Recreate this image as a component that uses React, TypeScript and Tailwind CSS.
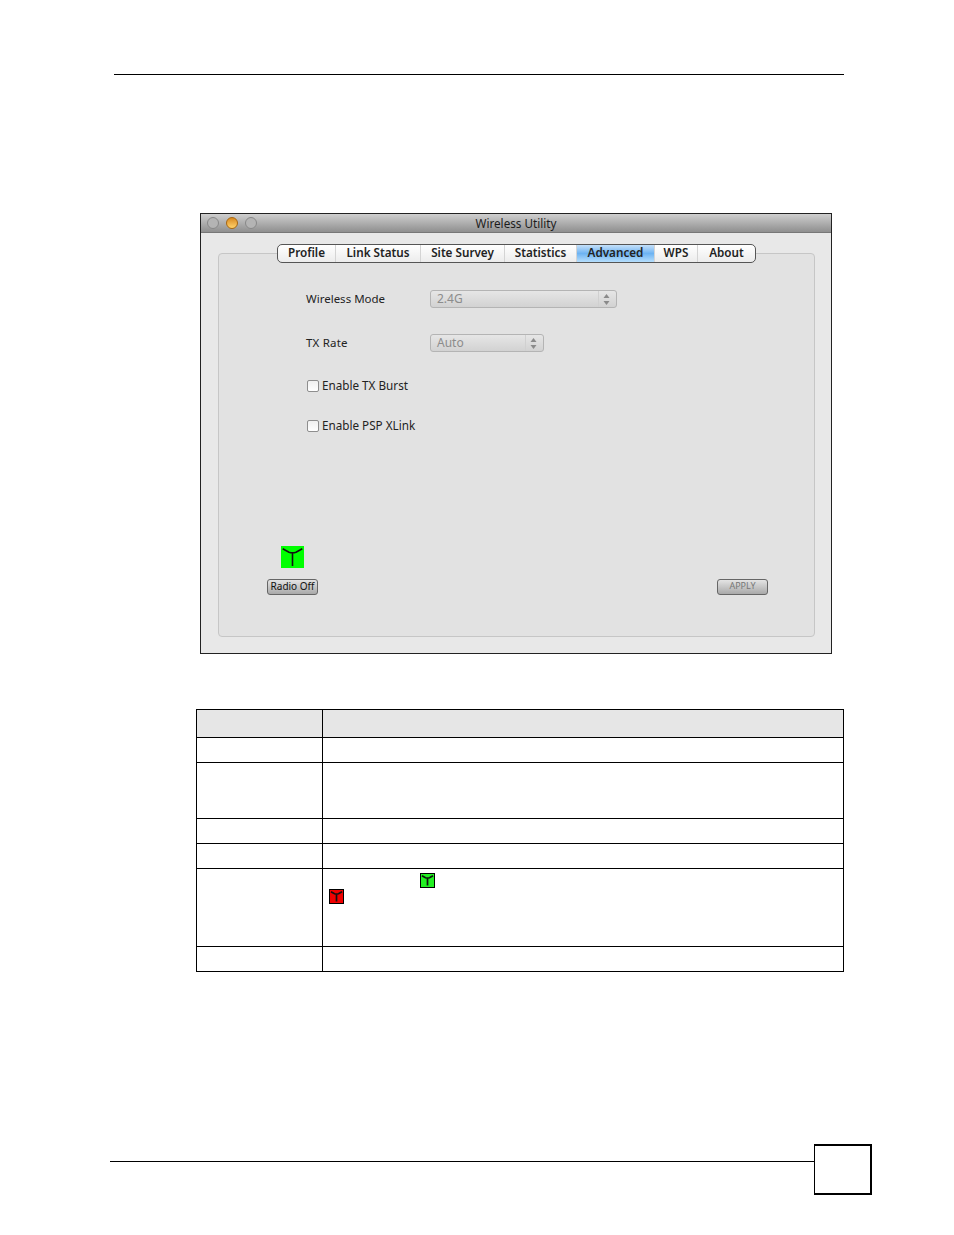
const tabs = [
  { label: "Profile", width: "w-[58px]" },
  { label: "Link Status", width: "w-[85px]" },
  { label: "Site Survey", width: "w-[84px]" },
  { label: "Statistics", width: "w-[72px]" },
  { label: "Advanced", width: "w-[78px]", active: true },
  { label: "WPS", width: "w-[43px]" },
  { label: "About", width: "w-[57px]" },
];

const rows = ["h-[25px]", "h-[56px]", "h-[25px]", "h-[25px]", "h-[78px]", "h-[25px]"];

function Antenna({ size, border, color }: { size: string; border?: boolean; color: string }) {
  return (
    <svg
      viewBox="0 0 23 22"
      className={`${size} ${color} ${border ? "border border-black" : ""} block`}
    >
      <path
        d="M11.500 20V6M1.700 2.800L8 6.200Q11.500 7.400 15 6.200L21.300 2.800"
        fill="none"
        stroke="#111"
        strokeWidth={border ? 3 : 1.6}
      />
    </svg>
  );
}

function Stepper() {
  return (
    <svg viewBox="0 0 7 11" className="w-[7px] h-[11px]">
      <path d="M3.500 0L6.500 4H.5z" fill="#8a8a8a" />
      <path d="M3.500 11L.5 7h6z" fill="#8a8a8a" />
    </svg>
  );
}

function Select({ value, width }: { value: string; width: string }) {
  return (
    <div
      className={`${width} h-[18px] flex items-center rounded-[3px] border border-[#b4b4b4] bg-gradient-to-b from-[#e6e6e6] to-[#d2d2d2] text-[12px] text-[#8c8c8c]`}
    >
      <span className="flex-1 pl-[6px]">{value}</span>
      <span className="w-[18px] h-full pr-[2px] flex items-center justify-center border-l border-[#d0d0d0]">
        <Stepper />
      </span>
    </div>
  );
}

function Check({ label, className }: { label: string; className: string }) {
  return (
    <label className={`flex items-center h-[16px] ${className}`}>
      <span className="w-[12px] h-[12px] rounded-[2px] border border-[#8e8e8e] bg-gradient-to-b from-[#f0f0f0] to-[#ffffff]" />
      <span className="ml-[3px] text-[11.7px] text-[#222]">{label}</span>
    </label>
  );
}

function PushButton({ label, muted }: { label: string; muted?: boolean }) {
  return (
    <button
      className={`w-[51px] h-[16px] pb-[2px] flex items-center justify-center rounded-[3px] border border-[#666] bg-gradient-to-b from-[#e4e4e4] to-[#a9a9a9] ${muted ? "text-[9px] text-[#777]" : "text-[10px] text-[#111]"}`}
    >
      {label}
    </button>
  );
}

export default function App() {
  return (
    <div className="relative w-[954px] h-[1235px] bg-white font-['Noto_Sans','Liberation_Sans',sans-serif] overflow-hidden">
      <div className="pt-[74px] pl-[114px]">
        <div className="w-[730px] h-px bg-black" />
      </div>

      {/* app window */}
      <div className="ml-[200px] mt-[138px] w-[632px] h-[441px] border border-[#222] bg-[#e8e8e8] flex flex-col">
        <div className="h-[19px] flex items-center border-b border-[#777] bg-gradient-to-b from-[#cfcfcf] to-[#8f8f8f]">
          <div className="flex items-center gap-[7px] pl-[6px] w-[80px]">
            <span className="w-[12px] h-[12px] rounded-full border border-[#888] bg-[#b4b4b4]" />
            <span className="w-[12px] h-[12px] rounded-full border border-[#a8660f] bg-gradient-to-b from-[#d98a1c] to-[#ffd36a]" />
            <span className="w-[12px] h-[12px] rounded-full border border-[#888] bg-[#b4b4b4]" />
          </div>
          <span className="flex-1 text-center pr-[80px] pt-px text-[11.7px] text-[#1c1c1c]">Wireless Utility</span>
        </div>

        <div className="mx-[17px] mt-[20px] w-[597px] h-[384px] rounded-[4px] border border-[#c6c6c6] bg-[#e2e2e2] flex flex-col">
          {/* tabs sit across the panel's top edge */}
          <div className="ml-[58px] -mt-[10px] w-[479px] h-[19px] flex rounded-[5px] border border-[#555] bg-gradient-to-b from-[#ffffff] to-[#ececec] overflow-hidden">
            {tabs.map((tab) => (
              <div
                key={tab.label}
                className={`${tab.width} pb-px flex items-center justify-center border-r border-[#d4d4d4] last:border-r-0 text-[11.7px] font-semibold text-[#222] ${tab.active ? "bg-gradient-to-b from-[#c5e0f8] via-[#6db3f2] to-[#b5defc]" : ""}`}
              >
                {tab.label}
              </div>
            ))}
          </div>

          <div className="mt-[27px] pl-[87px] flex items-center h-[18px]">
            <span className="w-[124px] text-[11.5px] text-[#222]">Wireless Mode</span>
            <Select value="2.4G" width="w-[187px]" />
          </div>
          <div className="mt-[26px] pl-[87px] flex items-center h-[18px]">
            <span className="w-[124px] text-[11.5px] tracking-[0.2px] text-[#222]">TX Rate</span>
            <Select value="Auto" width="w-[114px]" />
          </div>
          <Check label="Enable TX Burst" className="mt-[26px] ml-[88px]" />
          <Check label="Enable PSP XLink" className="mt-[24px] ml-[88px]" />

          <div className="mt-[112px] pl-[48px] pr-[46px] flex items-end justify-between">
            <div className="flex flex-col items-center">
              <Antenna size="w-[23px] h-[22px]" color="bg-[#00ff00]" />
              <div className="mt-[11px]">
                <PushButton label="Radio Off" />
              </div>
            </div>
            <PushButton label="APPLY" muted />
          </div>
        </div>
      </div>

      {/* description table */}
      <table className="ml-[196px] mt-[55px] w-[648px] table-fixed border-collapse">
        <thead>
          <tr className="h-[28px] bg-[#e6e6e6]">
            <th className="w-[126px] border border-black" />
            <th className="border border-black" />
          </tr>
        </thead>
        <tbody>
          {rows.map((height, i) => (
            <tr key={i} className={height}>
              <td className="border border-black" />
              <td className="border border-black align-top">
                {i === 4 && (
                  <div className="pt-[4px]">
                    <div className="ml-[97px]">
                      <Antenna size="w-[15px] h-[15px]" color="bg-[#22f022]" border />
                    </div>
                    <div className="ml-[6px] mt-px">
                      <Antenna size="w-[15px] h-[15px]" color="bg-[#f00000]" border />
                    </div>
                  </div>
                )}
              </td>
            </tr>
          ))}
        </tbody>
      </table>

      {/* page footer */}
      <div className="ml-[110px] mt-[172px] flex items-start">
        <div className="w-[704px] h-px mt-[17px] bg-black" />
        <div className="w-[58px] h-[51px] border-l border-t-2 border-r-2 border-b-2 border-black" />
      </div>
    </div>
  );
}
